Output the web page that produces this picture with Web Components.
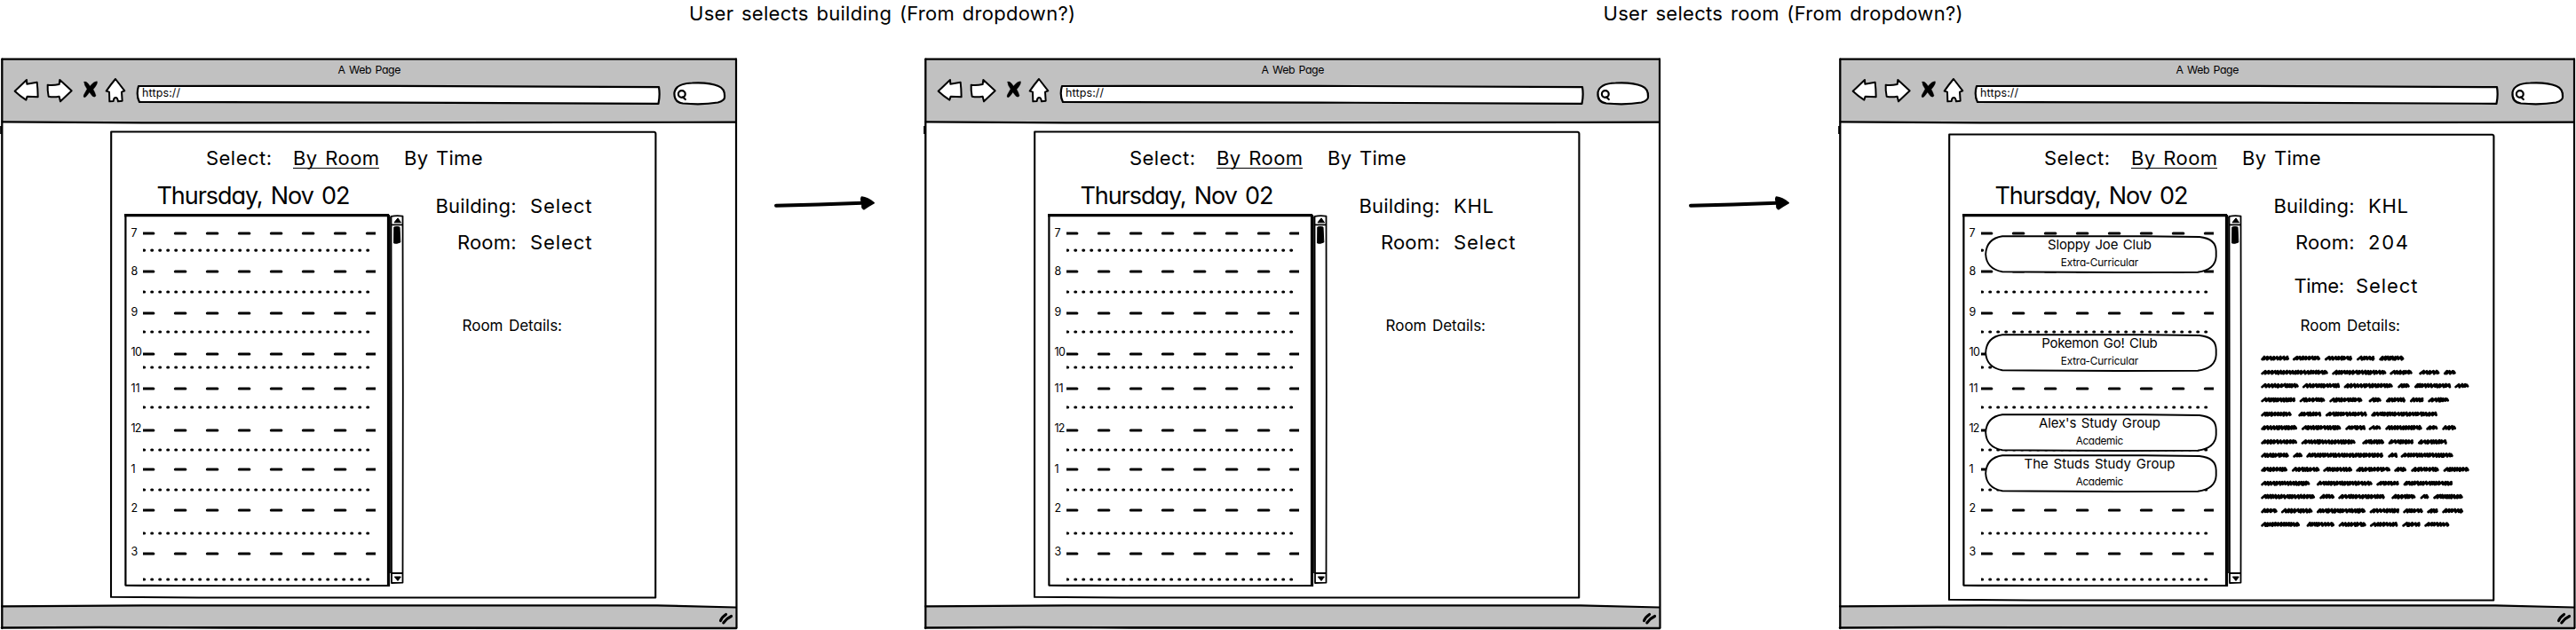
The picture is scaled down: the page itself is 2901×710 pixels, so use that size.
<!DOCTYPE html>
<html lang="en">
<head>
<meta charset="utf-8">
<title>Room scheduler wireflow</title>
<style>
html,body{margin:0;background:#fff;overflow:hidden}
body{font-family:Inter,"Liberation Sans",sans-serif;color:#000;font-feature-settings:"cv11"}
</style>
</head>
<body>
<flow-board></flow-board>
<script>
const define=(name,html,setup)=>customElements.define(name,class extends HTMLElement{
  connectedCallback(){
    if(this.shadowRoot)return;
    const root=this.attachShadow({mode:'open'});
    root.innerHTML=typeof html==='function'?html(this):html;
    if(setup)setup(this,root);
  }
});

/* A line of lettering tracked so that it fills the given width. */
define('ink-text',el=>`<style>
:host{display:block;flex:none;white-space:pre;line-height:1;word-spacing:.1em;font-size:${el.getAttribute('size')}px;width:${el.getAttribute('w')}px;height:${el.getAttribute('size')}px}
span{display:inline-block;line-height:1}
</style><span><slot></slot></span>`,(el,root)=>{
  const s=root.querySelector('span'),w=s.getBoundingClientRect().width,n=el.textContent.length;
  if(n>1)s.style.letterSpacing=((+el.getAttribute('w')-w)/(n-1)).toFixed(3)+'px';
});

define('nav-icons',`<style>:host{display:block;flex:none;width:133px;height:40px}svg{display:block}</style>
<svg width="133" height="40" viewBox="36 105 399 120" fill="#fff" stroke="#000" stroke-width="6" stroke-linejoin="round" stroke-linecap="round">
<path d="M50 158L90 120L91 134L125 128L127 150L128 178L92 176L88 188Q67 174 50 158Z"/>
<path d="M161 137Q180 139 200 135L202 120L242 157L204 193L200 176Q180 180 164 176Q160 156 161 137Z"/>
<path d="M390 117L421 157L411 161L413 191L399 193Q397 180 391 180Q384 180 383 192L370 193L369 161L359 158Q374 136 390 117Z"/>
<path d="M284 127Q292 122 304 141Q318 124 328 125Q332 132 315 152Q321 162 324 173Q321 181 312 175L302 162Q293 176 287 179Q280 180 283 171L294 151Q284 138 284 127Z" fill="#000" stroke-width="1"/>
</svg>`);

define('url-bar',`<style>:host{display:block;position:relative;flex:none;width:600px;height:40px}
svg{position:absolute;inset:0}ink-text{position:relative;padding:14px 0 0 15px}</style>
<svg width="600" height="40" fill="#fff" stroke="#000" stroke-width="2.2" stroke-linejoin="round"><path d="M11 12L300 11.8L597 13.2Q598.5 22 596.5 31.8L300 30.6L12 30Q8 22 11 12Z"/></svg>
<ink-text size="12.5" w="43">https://</ink-text>`);

define('search-pill',`<style>:host{display:block;flex:none;width:70px;height:40px}svg{display:block}</style>
<svg width="70" height="40" fill="#fff" stroke="#000" stroke-width="2.2" stroke-linecap="round"><path d="M8.500 19Q10.500 9 28.500 8.500Q48 7.500 58 12Q65.500 15 65 24Q65.500 28 57.500 30.500Q40 33.500 18 31.500Q7.500 30 8.500 19Z"/><ellipse cx="16.800" cy="21" rx="3.900" ry="3.800"/><path d="M18 24.500L20.800 27"/></svg>`);

define('wire-browser',`<style>
:host{display:block;position:relative;width:832px;height:645px;flex:none}
.frame{position:absolute;inset:0}
.in{position:relative;display:flex;flex-direction:column;height:645px}
header{height:73px;flex:none;display:flex;flex-direction:column;box-sizing:border-box;padding-top:7.500px}
header>ink-text{margin-left:380.500px}
nav{display:flex;padding-left:12px;margin-top:0}
main{flex:1}
</style>
<svg class="frame" width="832" height="645" fill="none" stroke="#000" stroke-width="2.200" stroke-linecap="round">
<path d="M2.500 1.700H829V73.500L160 73.500Q80 72.500 2.500 72.300Z" fill="#c1c1c1" stroke="none"/>
<path d="M2 617.500H750L829 619.300V643H2Z" fill="#c1c1c1" stroke="none"/>
<path d="M2.500 1.700H829"/><path d="M2.500 72.300Q80 72.500 160 73.400L829 72.700"/>
<path d="M2.300 1.700V643" stroke-width="2.300"/><path d="M1.400 77V86" stroke-width="2.500" stroke-linecap="butt"/>
<path d="M829 1.700V300L829.500 642.500"/>
<path d="M2 618.300Q80 618 160 617.300H740L829 619.500"/>
<path d="M2 642.500Q100 641.500 200 642.300L829 643" stroke-width="2.600"/>
<path d="M811.500 634.500Q813 630.500 817.500 627.500" stroke-width="3.200"/><path d="M814.800 636.800Q818 632 823.500 629.500" stroke-width="3.200"/>
</svg>
<div class="in"><header><ink-text size="12.300" w="71">A Web Page</ink-text>
<nav><nav-icons></nav-icons><url-bar></url-bar><span style="width:6px"></span><search-pill></search-pill></nav></header>
<main><slot></slot></main></div>`);

define('scroll-track',`<style>:host{display:block;flex:none;width:17px;height:420px}svg{display:block}</style>
<svg width="17" height="420" fill="none" stroke="#000" stroke-width="1.800" stroke-linejoin="round">
<path d="M1.500 2.800Q8 1.500 14.500 2.600L14.800 200L14.500 415.600L2 416Z"/><path d="M1 12.300H15M1.500 405H15"/>
<path d="M5 9.800L9 4.800L12.500 9.800Z" fill="#000" stroke-width="1"/><path d="M5.300 409L12.300 409L9 413.500Z" fill="#000" stroke-width="1"/>
<path d="M4.800 15Q8 14 11 15L11.800 32Q8 34 4.600 33Z" fill="#000" stroke-width="1"/></svg>`);

define('hour-row',el=>{
  const h=+el.getAttribute('h'),half=+el.getAttribute('half'),base=+el.getAttribute('base');
  return `<style>:host{display:flex;height:${h}px}div{width:13.500px;flex:none;padding-top:${base-10.6+8}px}svg{display:block;flex:none;overflow:hidden}</style>
<div><ink-text size="12.500" w="${el.getAttribute('lw')}">${el.getAttribute('label')}</ink-text></div>
<svg width="262" height="${h}" stroke="#000" stroke-linecap="round"><line x1=".300" x2="262" y1="8" y2="8" stroke-width="3" stroke-dasharray="11.600 24.400"/>
<line x1="1.400" x2="262" y1="${8+half}" y2="${8+half}" stroke-width="3.200" stroke-dasharray=".8 8.2" transform="translate(-.6 0)"/></svg>`;
});

define('booking-card',el=>`<style>:host{display:flex;flex-direction:column;align-items:center;position:absolute;left:25px;width:262px;height:43px;top:${el.getAttribute('y')}px}
svg{position:absolute;inset:0}ink-text{position:relative}.t{margin-top:3.300px}.s{margin-top:7.300px}.t,.s{left:-1.500px}</style>
<svg width="262" height="43" fill="#fff" stroke="#000" stroke-width="1.900"><path d="M20 1.300H180L242 2Q261 4 260.700 18.500V24Q260 39 240 41.700L150 42L20 41.300Q2 38 1.200 21.500Q2 4 20 1.300Z"/></svg>
<ink-text class="t" size="15" w="${el.getAttribute('tw')}">${el.getAttribute('name')}</ink-text>
<ink-text class="s" size="11.800" w="${el.getAttribute('sw')}">${el.getAttribute('kind')}</ink-text>`);

const hours=[[7,262.9,282,267.7,7],[8,306,329,310.3,7.5],[9,353,374,357,7],[10,399,414,401.7,12.5],[11,438,459,443,10],[12,485,507,487.7,12],[1,529,552,533.3,5],[2,575,601,578,7.5],[3,624,653,626.5,7.5]];
define('day-calendar',()=>`<style>:host{display:flex;height:420px}
.box{position:relative;width:299px;height:420px;flex:none}.edge{position:absolute;inset:0}
.rows{position:relative;padding:13.900px 0 0 7.500px}</style>
<div class="box"><svg class="edge" width="300" height="420" fill="none" stroke="#000" stroke-width="2.200" stroke-linejoin="round">
<path d="M0 1.600H298" stroke-width="3.500"/><path d="M1.400 1V418.600Q150 420 297.500 419"/><path d="M297.500 1V420" stroke-width="3.200"/><path d="M299.500 3V405" stroke="#222" stroke-width="1.200"/></svg>
<div class="rows">${hours.map((r,i)=>`<hour-row label="${r[0]}" lw="${r[4]}" h="${((hours[i+1]||[0,664])[1]-r[1]).toFixed(2)}" half="${(r[2]-r[1]).toFixed(2)}" base="${(r[3]-r[1]).toFixed(2)}"></hour-row>`).join('')}</div><slot></slot></div><scroll-track></scroll-track>`);

/* Scribbled placeholder copy: [row centre, word start, word end, ...] in thirds of a pixel. */
const lines=[
[101,144,236,251,341,359,449,467,525,543,624],[149,144,367,384,564,579,652,678,744,761,799],
[194,144,268,284,407,424,586,606,643,662,780,798,843],[242,144,257,274,357,375,483,508,547,566,629,647,690,708,776],
[290,144,244,270,343,362,499,516,736],[336,144,263,281,411,429,491,508,546,564,685,702,738,756,800],
[384,144,263,280,460,486,557,574,656,674,769],[429,144,235,252,281,297,554,573,599,616,790],
[477,144,230,248,339,354,449,465,578,594,632,651,742,760,844],[524,144,306,332,517,534,607,625,788],
[569,144,323,342,389,405,559,585,663,682,708,726,823],[617,144,196,212,315,332,494,511,607,624,688,705,739,756,824],
[663,144,272,298,389,406,496,512,603,621,679,696,777]];
define('scribble-text',()=>{
  let d='',seed=7;const rnd=()=>(seed=(seed*16807)%2147483647)/2147483647;
  for(const [y,...w] of lines)for(let i=0;i<w.length;i+=2){
    let x=w[i]+2;d+=`M${x} ${y+4}`;
    const end=w[i+1]-3;
    while(x<end-10){
      const k=7+rnd()*5;
      d+=`L${(x+k).toFixed(1)} ${(y-4-rnd()).toFixed(1)}`;
      d+=`L${(x+k-(rnd()<.5?1:-2)).toFixed(1)} ${(y+3+rnd()*2).toFixed(1)}`;
      x+=k;
    }
    d+=`L${end-3} ${y-3}L${end} ${y+2}`;
  }
  return `<style>:host{display:block;width:240px;height:200px}svg{display:block}</style>
<svg width="240" height="200" viewBox="138 90 720 600" fill="none" stroke="#000" stroke-width="8.500" stroke-linecap="round" stroke-linejoin="round"><path d="${d}"/></svg>`;
});

define('field-row',el=>`<style>:host{display:flex;height:21px;padding-left:${el.getAttribute('x')}px}ink-text+ink-text{margin-left:${el.getAttribute('gap')}px}</style>
<ink-text size="22" w="${el.getAttribute('lw')}">${el.getAttribute('label')}</ink-text><ink-text size="22" w="${el.getAttribute('vw')}">${el.getAttribute('value')}</ink-text>`);

define('room-scheduler',el=>{
  const b=el.getAttribute('building'),r=el.getAttribute('room'),t=el.getAttribute('time');
  const vw=v=>v==='Select'?69.5:45;
  const drop=+el.getAttribute('drop')||0;
  return `<style>
:host{display:block;position:relative;box-sizing:border-box;width:616px;height:528px;margin:9px 0 0 124px;padding-top:20px}
.edge{position:absolute;left:0;top:${drop}px}
.tabs{position:relative;display:flex;padding-left:108px;height:21px}
.tabs u{text-decoration:none;margin:0 28px 0 24px;width:97px;height:21.500px;border-bottom:1.500px solid #000}
.body{position:relative;display:flex;margin-top:19px}
.left{width:315px;padding-left:16px;flex:none}
.date{margin-left:36.500px;margin-top:-.500px}
day-calendar{margin-top:7.500px}
.right{flex:1;padding-top:13.500px;display:flex;flex-direction:column}
.right>field-row{margin-bottom:20.300px}.time{height:21px;margin-top:8.100px}
.det{margin:26.800px 0 0 65.500px}
scribble-text{margin:24px 0 0 20px}
</style>
<svg class="edge" width="616" height="528" fill="none" stroke="#000" stroke-width="2.100" stroke-linejoin="round"><path d="M1.200 1.500Q300 .8 612.500 1.800Q614.500 2 614.400 4L614.200 526.500H100Q50 526 1 525.800Z"/></svg>
<div class="tabs"><ink-text size="22" w="74">Select:</ink-text><u><ink-text size="22" w="97">By Room</ink-text></u><ink-text size="22" w="88.500">By Time</ink-text></div>
<div class="body"><div class="left"><ink-text class="date" size="27" w="218">Thursday, Nov 02</ink-text><day-calendar><slot></slot></day-calendar></div>
<div class="right"><field-row x="35.500" lw="91" gap="15.500" vw="${vw(b)}" label="Building:" value="${b}"></field-row>
<field-row x="60" lw="66.500" gap="15.500" vw="${vw(r)}" label="Room:" value="${r}"></field-row>
<div class="time">${t?`<field-row x="58.500" lw="56.500" gap="13" vw="69.500" label="Time:" value="${t}"></field-row>`:''}</div>
<ink-text class="det" size="17" w="112.500">Room Details:</ink-text>
${el.hasAttribute('details')?'<scribble-text></scribble-text>':''}</div></div>`;
});

define('flow-arrow',`<style>:host{display:block;flex:none;width:116px;height:24px}svg{display:block}</style>
<svg width="116" height="24" stroke="#000" stroke-linecap="round" stroke-linejoin="round"><path d="M3 13.700Q50 12.500 100 10.700" stroke-width="4" fill="none"/><path d="M99.500 4.300Q106 5 113 10.700Q107 14 102 17.500Q99 16 100.500 11Q98 7 99.500 4.300Z" stroke-width="2"/></svg>`);

define('flow-board',`<style>
:host{display:block;width:2901px;height:710px;overflow:hidden}
.cap{display:flex;box-sizing:border-box;height:65px;padding:3.800px 0 0 776px}
.cap ink-text+ink-text{margin-left:594.500px}
.steps{display:flex}
flow-arrow{margin:153px 53.500px 0 38.500px}
</style>
<div class="cap"><ink-text size="22" w="435">User selects building (From dropdown?)</ink-text><ink-text size="22" w="405">User selects room (From dropdown?)</ink-text></div>
<div class="steps">
<wire-browser></wire-browser>
</div>`,(el,root)=>{
  root.querySelector('.steps').innerHTML=`
<wire-browser><room-scheduler building="Select" room="Select"></room-scheduler></wire-browser>
<flow-arrow></flow-arrow>
<wire-browser><room-scheduler building="KHL" room="Select"></room-scheduler></wire-browser>
<flow-arrow style="margin-left:28.500px"></flow-arrow>
<wire-browser><room-scheduler building="KHL" room="204" time="Select" details drop="2.500">
<booking-card y="24" name="Sloppy Joe Club" kind="Extra-Curricular" tw="117" sw="87.500"></booking-card>
<booking-card y="135" name="Pokemon Go! Club" kind="Extra-Curricular" tw="130.500" sw="87.500"></booking-card>
<booking-card y="225" name="Alex's Study Group" kind="Academic" tw="137" sw="53.500"></booking-card>
<booking-card y="271" name="The Studs Study Group" kind="Academic" tw="170" sw="53.500"></booking-card>
</room-scheduler></wire-browser>`;
});
</script>
</body>
</html>
